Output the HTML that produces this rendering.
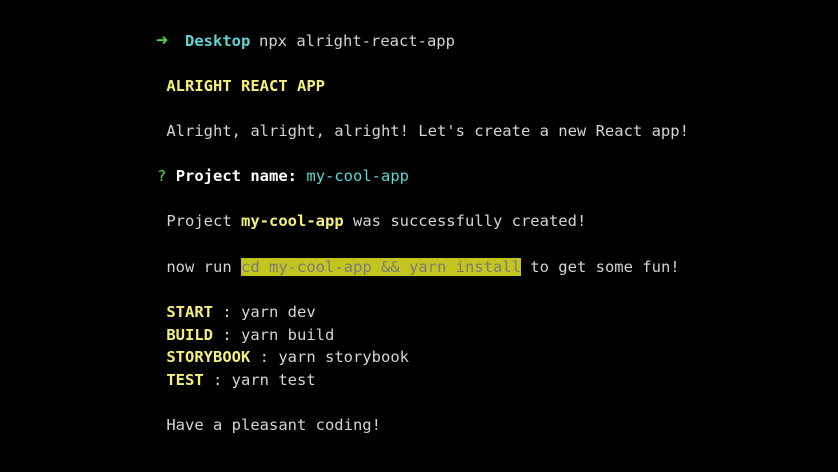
<!DOCTYPE html>
<html><head><meta charset="utf-8"><style>
html,body{margin:0;padding:0;background:#000;width:838px;height:472px;overflow:hidden}
.l{position:absolute;left:157px;font-family:"DejaVu Sans Mono","Liberation Mono",monospace;font-size:15.5px;line-height:22px;color:#d4d4d4;white-space:pre}
.y{color:#f5f07a;font-weight:bold}
.c{color:#5fd4d4}
.b{font-weight:bold;color:#fff}
.g{color:#46dc46}
.h{background:#c4c41e;color:#7c7c7c}
</style></head><body>
<div class="l" style="top:29px;left:156px;font-size:20px"><span class="g" style="font-weight:bold">➜</span></div>
<div class="l" style="top:30px;left:185px"><span class="c" style="font-weight:bold">Desktop</span></div>
<div class="l" style="top:30px;left:259px">npx alright-react-app</div>
<div class="l" style="top:75px"> <span class="y">ALRIGHT REACT APP</span></div>
<div class="l" style="top:120px"> Alright, alright, alright! Let's create a new React app!</div>
<div class="l" style="top:165px"><span class="g">?</span> <span class="b">Project name:</span> <span class="c">my-cool-app</span></div>
<div class="l" style="top:210px"> Project <span class="y">my-cool-app</span> was successfully created!</div>
<div class="l" style="top:256px"> now run <span class="h">cd my-cool-app &amp;&amp; yarn install</span> to get some fun!</div>
<div class="l" style="top:301px"> <span class="y">START</span> : yarn dev</div>
<div class="l" style="top:324px"> <span class="y">BUILD</span> : yarn build</div>
<div class="l" style="top:346px"> <span class="y">STORYBOOK</span> : yarn storybook</div>
<div class="l" style="top:369px"> <span class="y">TEST</span> : yarn test</div>
<div class="l" style="top:414px"> Have a pleasant coding!</div>
</body></html>
